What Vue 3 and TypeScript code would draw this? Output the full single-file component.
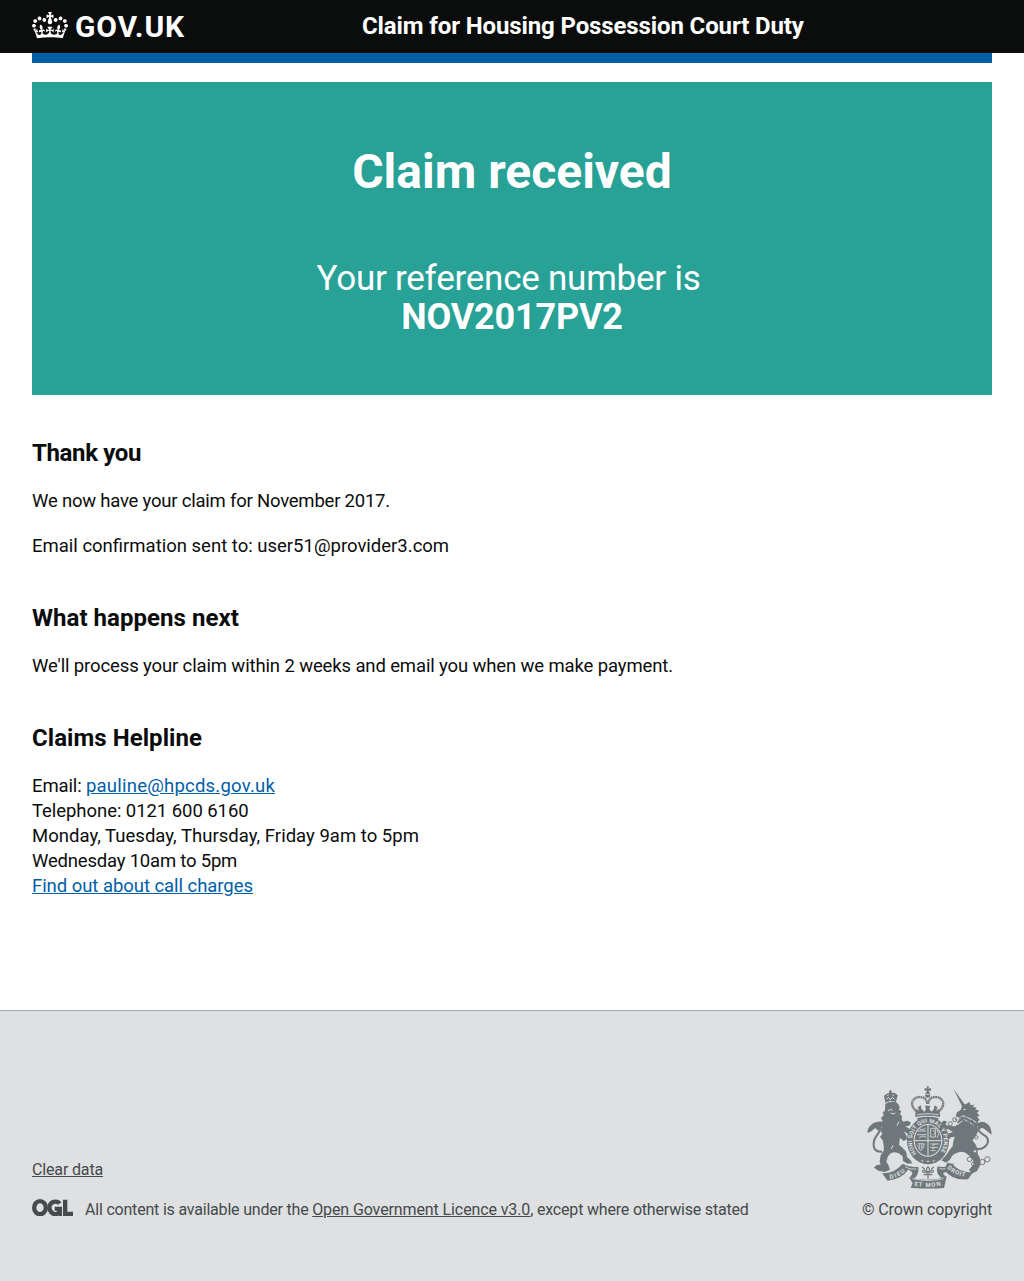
<script setup lang="ts">
const serviceName = 'Claim for Housing Possession Court Duty'
const reference = 'NOV2017PV2'
</script>

<template>
  <div class="page">
    <header class="top">
      <a class="brand">
        <svg class="crown" viewBox="0 0 132 97" aria-hidden="true">
          <path d="M25 30.2c3.5 1.5 7.7-.2 9.1-3.7 1.5-3.6-.2-7.8-3.9-9.2-3.6-1.4-7.6.3-9.1 3.9-1.4 3.5.3 7.5 3.9 9zM9 39.5c3.6 1.5 7.8-.2 9.2-3.7 1.5-3.6-.2-7.8-3.9-9.1-3.6-1.5-7.6.2-9.1 3.8-1.4 3.5.3 7.5 3.8 9zM4.4 57.2c3.5 1.5 7.7-.2 9.1-3.8 1.5-3.6-.2-7.7-3.9-9.1-3.5-1.5-7.6.3-9.1 3.8-1.4 3.5.3 7.6 3.9 9.1zm38.3-21.4c3.5 1.5 7.7-.2 9.1-3.8 1.5-3.6-.2-7.7-3.9-9.1-3.6-1.5-7.6.3-9.1 3.8-1.3 3.6.4 7.7 3.9 9.1zm64.4-5.6c-3.6 1.5-7.8-.2-9.1-3.7-1.5-3.6.2-7.8 3.8-9.2 3.6-1.4 7.7.3 9.2 3.9 1.3 3.5-.4 7.5-3.9 9zm15.9 9.3c-3.6 1.5-7.7-.2-9.1-3.7-1.5-3.6.2-7.8 3.7-9.1 3.6-1.5 7.7.2 9.2 3.8 1.5 3.5-.3 7.5-3.8 9zm4.7 17.7c-3.6 1.5-7.8-.2-9.2-3.8-1.5-3.6.2-7.7 3.9-9.1 3.6-1.5 7.7.3 9.2 3.8 1.3 3.5-.4 7.6-3.9 9.1zM89.3 35.8c-3.6 1.5-7.8-.2-9.2-3.8-1.4-3.6.2-7.7 3.9-9.1 3.6-1.5 7.7.3 9.2 3.8 1.4 3.6-.3 7.7-3.9 9.1zM69.7 17.7l8.9 4.7V9.3l-8.9 2.8c-.2-.3-.5-.6-.9-.9L72.4 0H59.6l3.5 11.2c-.3.3-.6.5-.9.9l-8.8-2.8v13.1l8.8-4.7c.3.3.6.7.9.9l-5 15.4v.1c-.2.8-.4 1.6-.4 2.4 0 4.1 3.1 7.5 7 8.1h.2c.3 0 .7.1 1 .1.4 0 .7 0 1-.1h.2c4-.6 7.1-4.1 7.1-8.1 0-.8-.1-1.7-.4-2.4V34l-5.1-15.4c.4-.2.7-.6 1-.9zM66 92.8c16.9 0 32.8 1.1 47.1 3.2 4-16.9 8.9-26.7 14-33.5l-9.6-3.4c1 4.9 1.1 7.2 0 10.2-1.5-1.4-3-4.3-4.2-8.7L108.6 76c2.8-2 5-3.2 7.5-3.3-4.4 9.4-10 11.9-13.6 11.2-4.3-.8-6.3-4.6-5.6-7.9 1-4.7 5.7-5.9 8-.5 4.3-8.7-3-11.4-7.6-8.8 7.1-7.2 7.9-13.5 2.1-21.1-8 6.1-8.1 12.3-4.5 20.8-4.7-5.4-12.1-2.5-9.5 6.2 3.4-5.2 7.9-2 7.2 3.1-.6 4.3-6.4 7.8-13.5 7.2-10.3-.9-10.9-8-11.2-13.8 2.5-.5 7.1 1.8 11 7.3L80.2 60c-4.1 4.4-8 5.3-12.3 5.4 1.4-4.4 8-11.6 8-11.6H55.5s6.4 7.2 7.9 11.6c-4.2-.1-8-1-12.3-5.4l1.4 16.4c3.9-5.5 8.5-7.7 10.9-7.3-.3 5.8-.9 12.8-11.1 13.8-7.2.6-12.9-2.9-13.5-7.2-.7-5 3.8-8.3 7.1-3.1 2.7-8.7-4.6-11.6-9.4-6.2 3.7-8.5 3.6-14.7-4.6-20.8-5.8 7.6-5 13.9 2.2 21.1-4.7-2.6-11.9.1-7.7 8.8 2.3-5.5 7.1-4.2 8.1.5.7 3.3-1.3 7.1-5.7 7.9-3.5.7-9-1.8-13.5-11.2 2.5.1 4.7 1.3 7.5 3.3l-4.7-15.4c-1.2 4.4-2.7 7.2-4.3 8.7-1.1-3-.9-5.3 0-10.2l-9.5 3.4c5 6.9 9.9 16.7 14 33.5 14.8-2.1 30.8-3.2 47.7-3.2z" />
        </svg>
        <span class="wordmark">GOV.UK</span>
      </a>
      <span class="service">{{ serviceName }}</span>
    </header>
    <div class="bar"></div>

    <main>
      <section class="panel">
        <h1>Claim received</h1>
        <p class="ref-label">Your reference number is</p>
        <p class="ref">{{ reference }}</p>
      </section>

      <section class="block">
        <h2 class="thanks">Thank you</h2>
        <p class="month">We now have your claim for November 2017.</p>
        <p>Email confirmation sent to: user51@provider3.com</p>
      </section>
      <section class="block">
        <h2>What happens next</h2>
        <p class="next">We'll process your claim within 2 weeks and email you when we make payment.</p>
      </section>
      <section class="block">
        <h2>Claims Helpline</h2>
        <ul class="contact">
          <li><span class="mail-label">Email: </span><a class="mail">pauline@hpcds.gov.uk</a></li>
          <li class="phone">Telephone: 0121 600 6160</li>
          <li class="days">Monday, Tuesday, Thursday, Friday 9am to 5pm</li>
          <li class="wed">Wednesday 10am to 5pm</li>
          <li><a class="charges">Find out about call charges</a></li>
        </ul>
      </section>
    </main>

    <footer>
      <div class="meta">
        <a class="clear">Clear data</a>
        <div class="licence">
          <svg class="ogl" viewBox="0 0 123 52" aria-hidden="true">
            <g fill="none" stroke="#454a4c" stroke-width="13">
              <ellipse cx="24" cy="26" rx="17.5" ry="19.5" />
              <path d="M83 13.500C78 6 63 5 55.500 15C48 26 55 45 69 45.500C75 45.500 80 43 81 39" />
            </g>
            <path fill="#454a4c" d="M68 23h22v28h-9l-1-7-7-9h-5zM93 2h13v36h17v13H93z" />
          </svg>
          <p><span class="l1">All content is available under the </span><a class="l2">Open Government Licence v3.0</a><span class="l3">, except where otherwise stated</span></p>
        </div>
      </div>
      <div class="copyright">
        <svg class="arms" viewBox="21 17 376 312" aria-hidden="true">
          <defs>
            <path id="garter" d="M170 219A48 54 0 1 1 238 219" />
            <path id="dieu" d="M90 296Q119 292 139 270" />
            <path id="droit" d="M261 264Q285 286 320 290" />
            <path id="mon" d="M163 316Q205 324 247 315" />
          </defs>

          <!-- lion -->
          <g fill="#6f777b">
            <path d="M76 67L72 46L81 40L91 36L104 38L113 44L108 65L91 61z" />
            <circle cx="91" cy="34" r="4" />
            <path d="M76 70Q92 61 108 66L114 70L119 80L117 88L124 93L120 101L126 108L125 116L129 124L143 121L153 127L148 136L136 138L150 147L153 157L143 160L131 153L140 167L141 177L131 182L120 172L117 193L129 204L139 215L141 230L151 239L157 249L143 250L129 242L128 228L115 218L103 216L93 218L84 228L79 244L85 254L90 268L75 275L55 271L42 262L50 254L62 253L59 244L62 225L72 209L71 195L68 180L60 170L67 160L61 150L66 140L60 131L68 122L63 113L72 104L68 97L75 90z" />
            <path d="M22 157Q23 137 42 127Q58 122 72 124L66 133Q64 144 54 151L46 143L32 154z" />
          </g>
          <path d="M66 214Q43 216 41 196Q40 178 50 166Q61 153 62 139" fill="none" stroke="#6f777b" stroke-width="6" />
          <path d="M79 57L85 51L91 58L97 51L104 57M82 46L86 43M97 43L102 46M84 92L91 87L98 90M92 98L99 101L106 98M117 124L111 136M99 195L94 206" fill="none" stroke="#dee0e2" stroke-width="3" />

          <!-- unicorn -->
          <g fill="#6f777b">
            <path d="M280 25L316 75L307 79z" />
            <path d="M306 77L319 70L330 65L331 74L343 73L338 79L350 82L346 87L358 91L351 97L359 106L351 109L359 119L353 124L358 134L350 139L356 150L350 162L344 172L337 180L346 191L353 206L353 222L360 233L361 254L351 272L335 280L327 268L341 252L339 239L328 226L314 216L300 214L284 220L276 227L270 238L258 247L244 240L259 224L267 211L278 198L280 184L284 169L273 171L262 181L251 178L263 160L279 155L265 147L247 145L241 131L250 121L260 122L257 134L272 137L286 138L294 129L299 118L305 108L296 112L287 107L291 96L302 89z" />
            <path d="M352 130Q368 116 386 134Q394 143 395 163L387 157Q376 147 367 142L354 148z" />
          </g>
          <path d="M348 205Q371 209 382 190Q389 172 370 163Q352 153 356 138" fill="none" stroke="#6f777b" stroke-width="6" />
          <path d="M310 88L317 87M286 126L309 106L338 119L349 127M291 134L313 117L341 134" fill="none" stroke="#dee0e2" stroke-width="3" />
          <g fill="none" stroke="#6f777b" stroke-width="3">
            <path d="M285 115L294 127L302 109L310 123L319 111L326 128L337 118L338 138" />
            <circle cx="284" cy="118" r="6" /><circle cx="271" cy="130" r="6" />
            <circle cx="329" cy="237" r="7" /><circle cx="342" cy="252" r="7" />
            <circle cx="367" cy="245" r="8" /><circle cx="382" cy="237" r="8" />
          </g>
          <g fill="#dee0e2" stroke="#6f777b" stroke-width="3">
            <circle cx="349" cy="171" r="5" />
            <circle cx="345" cy="213" r="5" />
          </g>

          <!-- royal crown -->
          <g fill="none" stroke="#6f777b" stroke-width="7" stroke-dasharray="5 1.500">
            <path d="M171 94Q153 80 157 64Q167 45 190 52Q200 56 202 72" />
            <path d="M235 94Q253 80 249 64Q239 45 216 52Q206 56 204 72" />
          </g>
          <g fill="#6f777b">
            <path d="M200 18H207L205 25L213 23V32L206 30L210 42H197L201 30L194 32V23L202 25z" />
            <circle cx="203" cy="44" r="8" />
            <path d="M166 100L170 85L177 93L174 80L183 75L184 86L193 94L198 86L195 76H211L208 86L214 94L222 86L223 75L232 80L229 93L236 85L240 100V110Q204 102 166 110z" />
            <path d="M172 113Q204 106 235 113V119Q204 112 172 119z" />
          </g>
          <path d="M171 103Q204 97 236 103M194 42H212" fill="none" stroke="#dee0e2" stroke-width="2.500" />

          <!-- shield and garter -->
          <ellipse cx="204" cy="181" rx="63" ry="71" fill="#6f777b" />
          <ellipse cx="204" cy="180" rx="43" ry="49" fill="#dee0e2" />
          <ellipse cx="204" cy="180" rx="40" ry="46" fill="#6f777b" />
          <g fill="none" stroke="#dee0e2" stroke-width="3">
            <path d="M204 134V226M164 181H244" />
            <path d="M174 152H198M171 163H199M177 172L189 167L198 171M179 145L186 149L196 144" stroke-width="2.500" />
            <path d="M212 144H226V170H212V144M219 149L226 157L219 165M230 148L237 160L231 172" stroke-width="2.500" />
            <path d="M173 190H193Q191 207 181 211L172 193M178 190V205M184 190V207M189 191V203" stroke-width="2" />
            <path d="M211 191H237M211 201H234M212 211H227M217 195L226 192M216 206L225 202" stroke-width="2.500" />
            <path d="M184 240L190 243M200 243L208 243M218 243L224 240" />
          </g>
          <text class="motto" font-size="17"><textPath href="#garter" textLength="236" lengthAdjust="spacing">HONI SOIT QUI MAL Y PENSE</textPath></text>

          <!-- ribbons -->
          <g fill="#6f777b">
            <path d="M66 279Q102 281 127 251L146 266Q126 297 83 301z" />
            <path d="M127 250Q151 263 175 259Q178 282 163 294L147 291Q164 279 153 273L131 259z" />
            <path d="M147 291Q204 307 260 289L252 323Q205 327 152 322L158 309z" />
            <path d="M281 248Q257 265 233 258Q226 279 244 293L260 289Q239 278 259 275L278 257z" />
            <path d="M262 247L277 250Q293 274 338 277L324 297Q275 301 253 268z" />
          </g>
          <path d="M135 259Q149 269 169 266M150 274Q156 281 150 290M256 265Q248 268 239 264M158 295Q205 306 250 295" fill="none" stroke="#dee0e2" stroke-width="2.500" />
          <g class="motto" font-size="18">
            <text><textPath href="#dieu" textLength="52">DIEU</textPath></text>
            <text><textPath href="#droit" textLength="60">DROIT</textPath></text>
            <text><textPath href="#mon" textLength="80">ET MON</textPath></text>
          </g>
          <g fill="none" stroke="#6f777b" stroke-width="3.500">
            <path d="M204 259Q195 267 204 277Q213 267 204 259M200 279Q196 266 188 271Q188 278 196 277M208 279Q212 266 220 271Q220 278 212 277M191 283H217M204 278V295M186 260L194 266M222 260L214 266" />
          </g>
        </svg>
        <a class="crown-copy">© Crown copyright</a>
      </div>
    </footer>
  </div>
</template>

<style>
body {
  margin: 0;
}
</style>

<style scoped>
.page {
  display: flex;
  flex-direction: column;
  min-height: 1281px;
  font-family: Roboto, "Liberation Sans", sans-serif;
  font-size: 18.5px;
  line-height: 25px;
  color: #0b0c0c;
  background: #fff;
}
h1, h2, p, ul {
  margin: 0;
  padding: 0;
}
.top {
  box-sizing: border-box;
  display: flex;
  height: 53px;
  padding: 0 32px;
  background: #0b0c0c;
  color: #fff;
}
.brand {
  display: flex;
  width: 330px;
}
.crown {
  width: 36px;
  height: 26.5px;
  margin-top: 12px;
  fill: #fff;
}
.wordmark {
  margin: 9px 0 0 7px;
  font-size: 30px;
  font-weight: 700;
  line-height: 35px;
  letter-spacing: 0.87px;
}
.service {
  margin-top: 11px;
  font-size: 24px;
  font-weight: 700;
  line-height: 30px;
  letter-spacing: -0.12px;
}
.bar {
  height: 10px;
  margin: 0 32px;
  background: #005ea5;
}
main {
  flex: 1;
  padding: 19px 32px 0;
}
.panel {
  box-sizing: border-box;
  height: 313px;
  margin-bottom: 43px;
  padding-top: 65px;
  background: #28a197;
  color: #fff;
  text-align: center;
}
h1 {
  font-size: 48px;
  line-height: 50px;
}
.ref-label {
  margin-top: 62px;
  padding-right: 7px;
  font-size: 35px;
  line-height: 39px;
  letter-spacing: -0.24px;
}
.ref {
  font-size: 36px;
  font-weight: 700;
  line-height: 39px;
  letter-spacing: -0.2px;
}
h2 {
  margin-bottom: 21px;
  font-size: 24px;
  line-height: 30px;
  letter-spacing: 0.05px;
}
.thanks {
  letter-spacing: -0.37px;
}
.block {
  margin-bottom: 44px;
}
.block p + p {
  margin-top: 20px;
}
.month {
  letter-spacing: -0.215px;
}
.next {
  letter-spacing: -0.13px;
}
.contact {
  list-style: none;
}
.mail-label {
  letter-spacing: -0.13px;
}
.mail {
  letter-spacing: 0.22px;
}
.phone {
  letter-spacing: -0.06px;
}
.days {
  letter-spacing: 0.02px;
}
.wed {
  letter-spacing: -0.2px;
}
.charges {
  letter-spacing: -0.05px;
}
.mail, .charges {
  color: #005ea5;
  text-decoration: underline;
}
footer {
  box-sizing: border-box;
  display: flex;
  justify-content: space-between;
  height: 271px;
  padding: 75px 32px 0;
  border-top: 1px solid #a1acb2;
  background: #dee0e2;
  color: #454a4c;
  font-size: 16px;
  line-height: 20px;
}
.meta {
  padding-top: 74px;
}
.clear {
  display: block;
  letter-spacing: -0.15px;
  text-decoration: underline;
}
.licence {
  display: flex;
  margin-top: 20px;
}
.ogl {
  width: 41px;
  height: 17.33px;
  margin: -1px 12px 0 0;
}
.l1 {
  letter-spacing: -0.2px;
  white-space: pre;
}
.l2 {
  letter-spacing: -0.11px;
  text-decoration: underline;
}
.l3 {
  letter-spacing: -0.19px;
}
.copyright {
  display: flex;
  flex-direction: column;
  align-items: flex-end;
}
.arms {
  display: block;
  width: 125.33px;
  height: 104px;
  overflow: visible;
}
.motto {
  fill: #dee0e2;
  font-family: Roboto, sans-serif;
  font-weight: 700;
}
.crown-copy {
  margin-top: 10px;
  letter-spacing: -0.15px;
}
</style>
